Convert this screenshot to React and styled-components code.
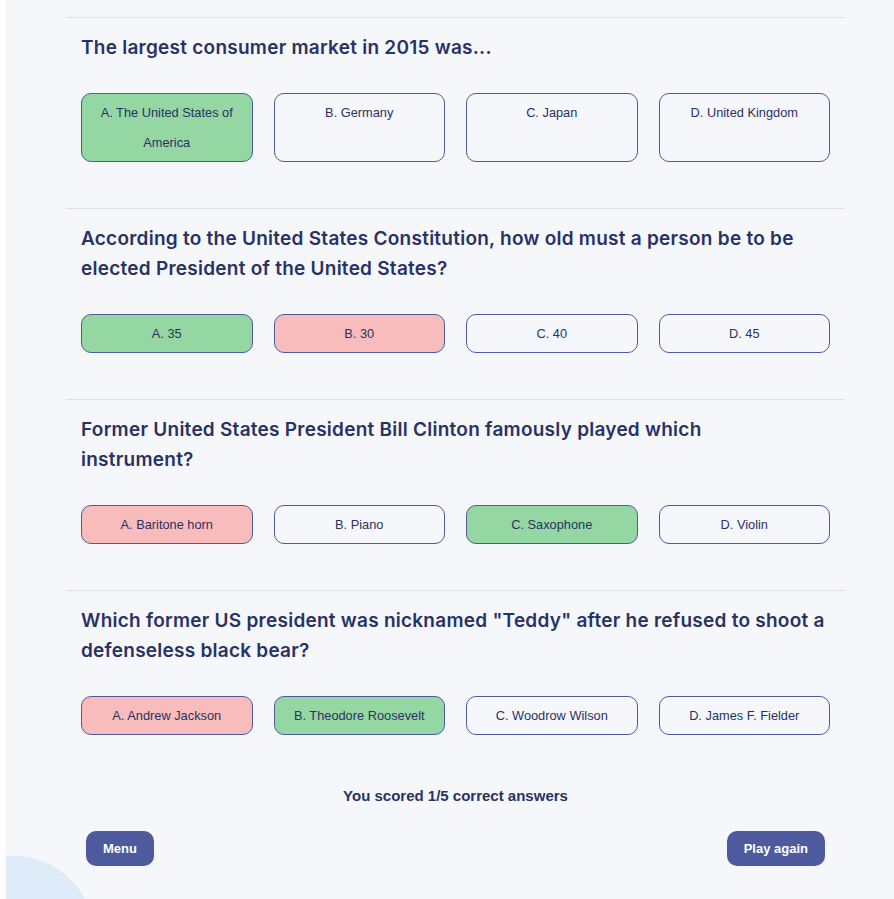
import React from 'react'
import styled, { createGlobalStyle } from 'styled-components'

const GlobalStyle = createGlobalStyle`
  body {
    margin: 0;
    background: #fff;
  }
  * {
    box-sizing: border-box;
  }
`

const Page = styled.div`
  min-height: 899px;
  margin-left: 6px;
  background: #f5f7fb;
  position: relative;
  overflow: hidden;
`

const Blob = styled.div`
  position: absolute;
  left: -72px;
  top: 856px;
  width: 160px;
  height: 160px;
  border-radius: 50%;
  background: #deebf8;
`

const Wrapper = styled.div`
  position: relative;
  width: 779px;
  margin-left: 60px;
  padding-top: 17px;
`

const Question = styled.div`
  border-top: 1px solid #dbdef0;
  padding: 15px 15px 46px;
`

const QuestionTitle = styled.h2`
  margin: 0;
  max-width: 749px;
  white-space: pre-line;
  font-family: Inter, "Liberation Sans", sans-serif;
  font-size: 19px;
  font-weight: 600;
  letter-spacing: 0.25px;
  line-height: 30px;
  color: #293264;
`

const Options = styled.div`
  display: grid;
  grid-template-columns: repeat(4, 1fr);
  column-gap: 21px;
  margin-top: 30px;
`

const Option = styled.div`
  border: 1px solid #4d5b9e;
  border-radius: 10px;
  padding: 3.5px 10px;
  text-align: center;
  font-family: "Liberation Sans", Arial, sans-serif;
  font-size: 12.8px;
  line-height: 30px;
  color: #293264;
  background: ${props =>
    props.state === 'correct' ? '#94d7a2' : props.state === 'wrong' ? '#f8bcbc' : 'transparent'};
`

const Score = styled.p`
  margin: 0;
  padding-top: 6px;
  text-align: center;
  font-family: "Liberation Sans", Arial, sans-serif;
  font-size: 15px;
  font-weight: 700;
  line-height: 18px;
  color: #293264;
`

const Footer = styled.div`
  display: flex;
  justify-content: space-between;
  padding: 26px 20px 0;
`

const Button = styled.button`
  height: 35px;
  padding: 0 17px;
  border: none;
  border-radius: 10px;
  background: #4d5b9e;
  color: #fff;
  font-family: "Liberation Sans", Arial, sans-serif;
  font-size: 13px;
  font-weight: 700;
  cursor: pointer;
`

const questions = [
  {
    text: 'The largest consumer market in 2015 was...',
    options: ['A. The United States of America', 'B. Germany', 'C. Japan', 'D. United Kingdom'],
    correct: 0,
    picked: 0,
  },
  {
    text: 'According to the United States Constitution, how old must a person be to be\nelected President of the United States?',
    options: ['A. 35', 'B. 30', 'C. 40', 'D. 45'],
    correct: 0,
    picked: 1,
  },
  {
    text: 'Former United States President Bill Clinton famously played which\ninstrument?',
    options: ['A. Baritone horn', 'B. Piano', 'C. Saxophone', 'D. Violin'],
    correct: 2,
    picked: 0,
  },
  {
    text: 'Which former US president was nicknamed "Teddy" after he refused to shoot a\ndefenseless black bear?',
    options: ['A. Andrew Jackson', 'B. Theodore Roosevelt', 'C. Woodrow Wilson', 'D. James F. Fielder'],
    correct: 1,
    picked: 0,
  },
]

const optionState = (q, i) => {
  if (i === q.correct) return 'correct'
  if (i === q.picked) return 'wrong'
  return 'none'
}

const App = () => {
  return (
    <>
      <GlobalStyle />
      <Page>
        <Blob />
        <Wrapper>
          {questions.map(q => (
            <Question key={q.text}>
              <QuestionTitle>{q.text}</QuestionTitle>
              <Options>
                {q.options.map((o, i) => (
                  <Option key={o} state={optionState(q, i)}>{o}</Option>
                ))}
              </Options>
            </Question>
          ))}
          <Score>You scored 1/5 correct answers</Score>
          <Footer>
            <Button>Menu</Button>
            <Button>Play again</Button>
          </Footer>
        </Wrapper>
      </Page>
    </>
  )
}

export default App
